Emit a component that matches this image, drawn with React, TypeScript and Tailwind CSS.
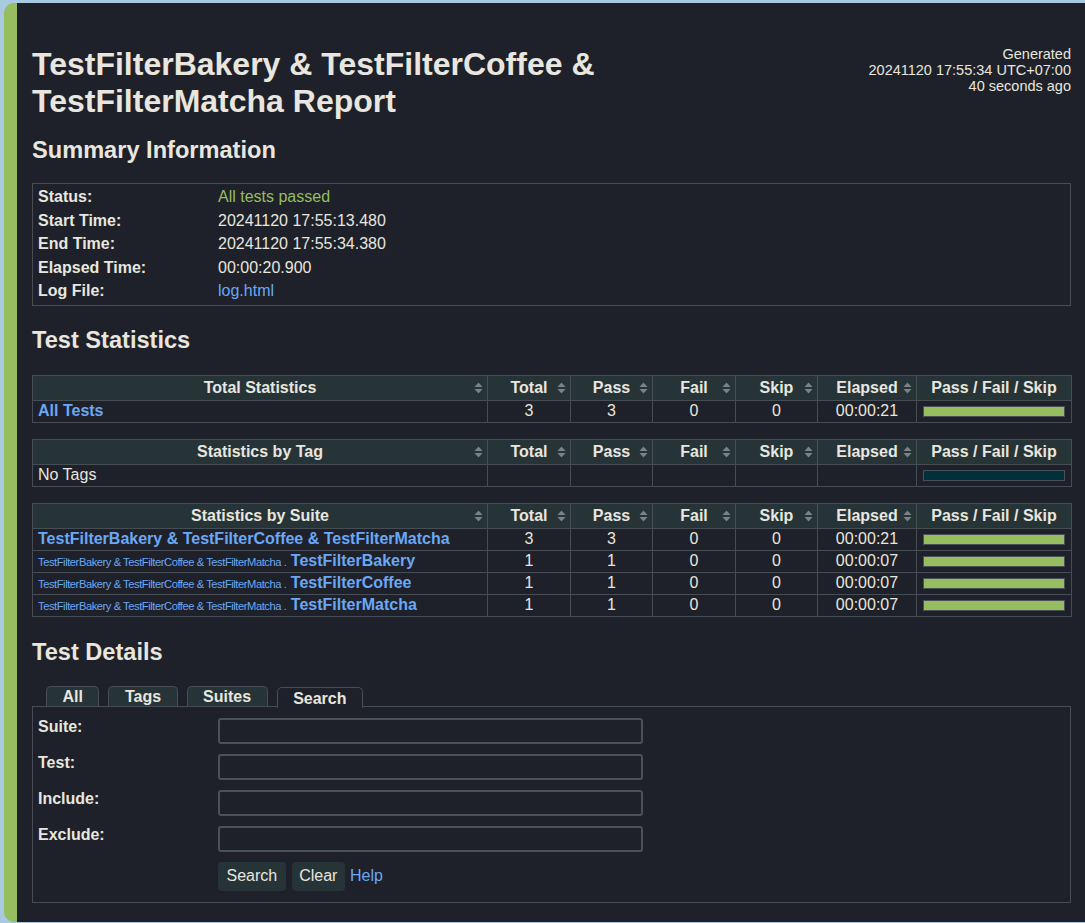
import React from 'react';

const SortIcon = () => (
  <svg width="9" height="12" viewBox="0 0 9 12" className="block">
    <path d="M4.5 0.5L8.5 5L0.5 5Z" fill="#7c8288" />
    <path d="M0.5 7L8.5 7L4.5 11.5Z" fill="#7c8288" />
  </svg>
);

const Th = ({ children, sort = true }: { children: React.ReactNode; sort?: boolean }) => (
  <th className="h-[25px] border border-[#464d55] bg-[#263438] p-0 font-bold">
    <div className="grid grid-cols-[1fr_auto_1fr] items-center px-[4px]">
      <span />
      <span className="px-[2px] whitespace-nowrap">{children}</span>
      <span className="justify-self-end">{sort && <SortIcon />}</span>
    </div>
  </th>
);

const Td = ({ children, left = false }: { children?: React.ReactNode; left?: boolean }) => (
  <td className={`h-[22px] border border-[#464d55] px-[5px] py-0 whitespace-nowrap ${left ? 'text-left' : 'text-center'}`}>
    {children}
  </td>
);

const Bar = ({ empty = false }: { empty?: boolean }) => (
  <div className={`mx-[1px] h-[11px] border border-[#4a5058] ${empty ? 'bg-[#02303a]' : 'bg-[#97bd61]'}`} />
);

const Cols = () => (
  <colgroup>
    <col className="w-[455px]" />
    <col className="w-[83px]" />
    <col className="w-[82px]" />
    <col className="w-[83px]" />
    <col className="w-[82px]" />
    <col className="w-[99px]" />
    <col className="w-[155px]" />
  </colgroup>
);

const HeadRow = ({ title }: { title: string }) => (
  <thead>
    <tr>
      <Th>{title}</Th>
      <Th>Total</Th>
      <Th>Pass</Th>
      <Th>Fail</Th>
      <Th>Skip</Th>
      <Th>Elapsed</Th>
      <Th sort={false}>Pass / Fail / Skip</Th>
    </tr>
  </thead>
);

const link = 'text-[#6aa8f5]';
const parent = 'TestFilterBakery & TestFilterCoffee & TestFilterMatcha';

const suites = [
  { name: 'TestFilterBakery', el: '00:00:07' },
  { name: 'TestFilterCoffee', el: '00:00:07' },
  { name: 'TestFilterMatcha', el: '00:00:07' },
];

export default function App() {
  return (
    <div className="min-h-screen bg-[#a9c9e1] pt-[3px] pb-[2px] font-['Liberation_Sans',Arial,sans-serif] text-[16px] leading-[1.15] text-[#e8e6df]">
      <div className="ml-[4px] rounded-l-[10px] border-l-[13px] border-[#97bd61] bg-[#1e2129] pl-[15px] pr-[14px] pt-[43px] pb-[19px]">
        {/* header */}
        <div className="flex items-start justify-between">
          <h1 className="w-[700px] text-[32px] font-bold leading-[37px]">
            TestFilterBakery &amp; TestFilterCoffee &amp; TestFilterMatcha Report
          </h1>
          <div className="text-right text-[14.5px] leading-[16px]">
            <div>Generated</div>
            <div>20241120 17:55:34 UTC+07:00</div>
            <div>40 seconds ago</div>
          </div>
        </div>

        {/* summary */}
        <h2 className="mt-[16.5px] text-[23.6px] font-bold leading-[27px]">Summary Information</h2>
        <div className="mt-[19.5px] border border-[#464d55] px-[5px] py-[1.5px]">
          {[
            ['Status:', <span className="text-[#97bd61]">All tests passed</span>],
            ['Start Time:', '20241120 17:55:13.480'],
            ['End Time:', '20241120 17:55:34.380'],
            ['Elapsed Time:', '00:00:20.900'],
            ['Log File:', <span className={link}>log.html</span>],
          ].map(([k, v], i) => (
            <div key={i} className="grid h-[23.5px] grid-cols-[180px_1fr] items-center">
              <div className="font-bold">{k}</div>
              <div>{v}</div>
            </div>
          ))}
        </div>

        {/* statistics */}
        <h2 className="mt-[21px] text-[23.6px] font-bold leading-[27px]">Test Statistics</h2>

        <table className="mt-[21.5px] w-full table-fixed border-collapse">
          <Cols />
          <HeadRow title="Total Statistics" />
          <tbody>
            <tr>
              <Td left><span className={`font-bold ${link}`}>All Tests</span></Td>
              <Td>3</Td>
              <Td>3</Td>
              <Td>0</Td>
              <Td>0</Td>
              <Td>00:00:21</Td>
              <Td><Bar /></Td>
            </tr>
          </tbody>
        </table>

        <table className="mt-[16px] w-full table-fixed border-collapse">
          <Cols />
          <HeadRow title="Statistics by Tag" />
          <tbody>
            <tr>
              <Td left>No Tags</Td>
              <Td />
              <Td />
              <Td />
              <Td />
              <Td />
              <Td><Bar empty /></Td>
            </tr>
          </tbody>
        </table>

        <table className="mt-[16px] w-full table-fixed border-collapse">
          <Cols />
          <HeadRow title="Statistics by Suite" />
          <tbody>
            <tr>
              <Td left><span className={`font-bold ${link}`}>{parent}</span></Td>
              <Td>3</Td>
              <Td>3</Td>
              <Td>0</Td>
              <Td>0</Td>
              <Td>00:00:21</Td>
              <Td><Bar /></Td>
            </tr>
            {suites.map((s) => (
              <tr key={s.name}>
                <Td left>
                  <span className={`text-[11.2px] tracking-[-0.45px] ${link}`}>{parent} .</span>{' '}
                  <span className={`font-bold ${link}`}>{s.name}</span>
                </Td>
                <Td>1</Td>
                <Td>1</Td>
                <Td>0</Td>
                <Td>0</Td>
                <Td>{s.el}</Td>
                <Td><Bar /></Td>
              </tr>
            ))}
          </tbody>
        </table>

        {/* details */}
        <h2 className="mt-[21.5px] text-[23.6px] font-bold leading-[27px]">Test Details</h2>

        <div className="mt-[20.5px] flex h-[20px] items-start gap-[9px] pl-[14px]">
          {['All', 'Tags', 'Suites'].map((t) => (
            <div key={t} className="h-[20px] rounded-t-[5px] border border-b-0 border-[#464d55] bg-[#263438] px-[15.5px] font-bold leading-[19px]">
              {t}
            </div>
          ))}
          <div className="relative z-10 mt-[1px] h-[21px] rounded-t-[5px] border border-b-0 border-[#464d55] bg-[#1e2129] px-[15.5px] font-bold leading-[21px]">
            Search
          </div>
        </div>

        <div className="border border-[#464d55] px-[5px] pt-[11px] pb-[11px]">
          {['Suite:', 'Test:', 'Include:', 'Exclude:'].map((l) => (
            <div key={l} className="mb-[10px] flex items-start">
              <div className="w-[180px] font-bold leading-[18px]">{l}</div>
              <input className="h-[26px] w-[425px] rounded-[3px] border-2 border-[#4a5159] bg-transparent px-1 text-[#e8e6df] outline-none" />
            </div>
          ))}
          <div className="ml-[180px] flex items-center">
            <button className="h-[29px] rounded-[4px] bg-[#263438] px-[8.5px] text-[#e8e6df]">Search</button>
            <button className="ml-[6px] h-[29px] rounded-[4px] bg-[#263438] px-[7.5px] text-[#e8e6df]">Clear</button>
            <span className={`ml-[5px] ${link}`}>Help</span>
          </div>
        </div>
      </div>
    </div>
  );
}
